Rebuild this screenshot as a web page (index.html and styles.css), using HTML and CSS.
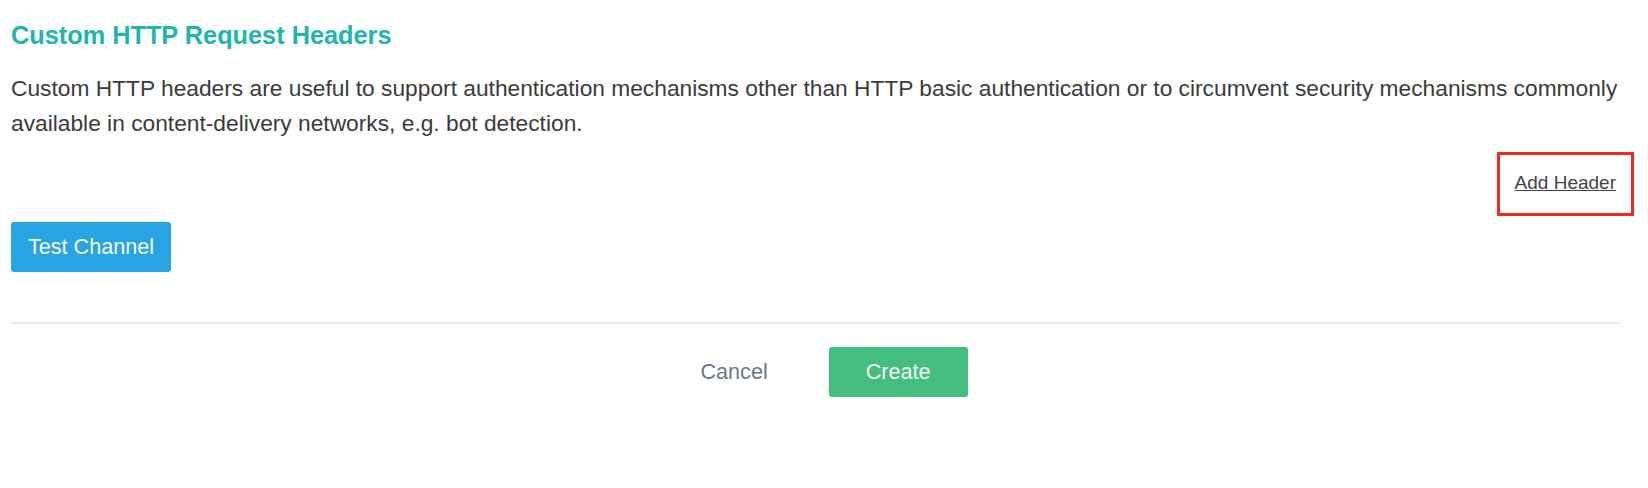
FILE: index.html
```html
<!DOCTYPE html>
<html lang="en">
<head>
<meta charset="utf-8">
<title>Custom HTTP Request Headers</title>
<link rel="stylesheet" href="styles.css">
</head>
<body>
<div class="page">
  <h2 class="title">Custom HTTP Request Headers</h2>
  <p class="desc">Custom HTTP headers are useful to support authentication mechanisms other than HTTP basic authentication or to circumvent security mechanisms commonly available in content-delivery networks, e.g. bot detection.</p>
  <div class="add-row">
    <a class="add-link" href="#">Add Header</a>
  </div>
  <div class="test-row">
    <button class="btn btn-blue" type="button">Test Channel</button>
  </div>
  <div class="footer">
    <button class="btn btn-plain" type="button">Cancel</button>
    <button class="btn btn-green" type="button">Create</button>
  </div>
</div>
</body>
</html>
```
FILE: styles.css
```css
html, body {
  margin: 0;
  padding: 0;
  background: #ffffff;
}

body {
  font-family: "Liberation Sans", Arial, sans-serif;
  color: #3a3a3a;
}

.page {
  padding: 0 28px 0 11px;
}

.title {
  margin: 20px 0 0 0;
  font-size: 25.3px;
  line-height: 30px;
  font-weight: bold;
  color: #20b5ae;
}

.desc {
  margin: 21px 0 0 0;
  font-size: 22.75px;
  line-height: 35px;
  color: #3b3b3b;
}

.add-row {
  display: flex;
  justify-content: flex-end;
  margin-top: 31px;
}

.add-link {
  position: relative;
  font-size: 19px;
  line-height: 22px;
  color: #444444;
  text-decoration: underline;
  padding-right: 4px;
}

.add-link::after {
  content: "";
  position: absolute;
  left: -18px;
  right: -14px;
  top: -20px;
  bottom: -22px;
  border: 3px solid #f02a1f;
}

.test-row {
  margin-top: 28px;
  display: flex;
}

.btn {
  height: 50px;
  border: none;
  border-radius: 3px;
  font-family: "Liberation Sans", Arial, sans-serif;
  font-size: 21.6px;
  line-height: 50px;
  cursor: pointer;
}

.btn-blue {
  padding: 0 17px;
  background: #29a4e2;
  color: #f4faff;
}

.footer {
  margin-top: 50px;
  border-top: 2px solid #e8ebee;
  padding-top: 23px;
  display: flex;
  justify-content: center;
  gap: 24px;
}

.btn-plain {
  padding: 0 37px;
  background: transparent;
  color: #6b7889;
}

.btn-green {
  padding: 0 37px;
  background: #43be7e;
  color: #f2fff8;
}
```
